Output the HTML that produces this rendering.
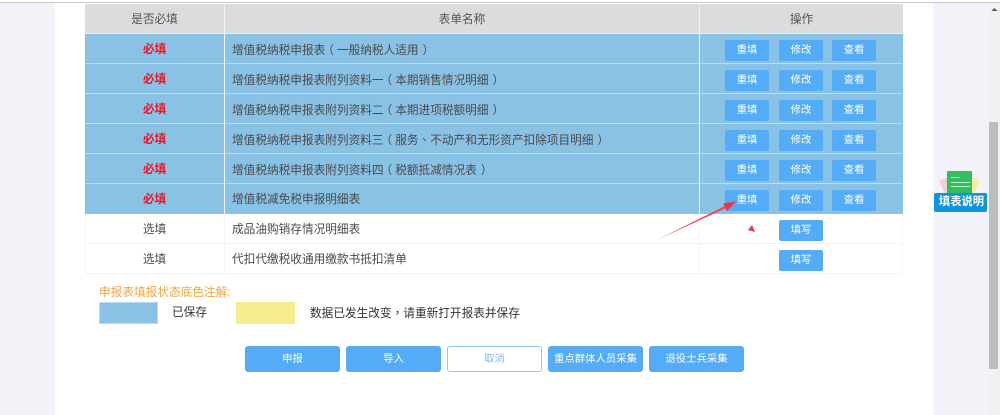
<!DOCTYPE html>
<html lang="zh-Hans"><head><meta charset="utf-8"><title>申报表</title>
<style>
html,body{margin:0;padding:0;width:1000px;height:415px;overflow:hidden;background:#f2f3f8;font-family:"Liberation Sans","Noto Sans CJK SC",sans-serif}
.a{position:absolute;box-sizing:border-box}
.t{position:absolute;white-space:nowrap;font-size:11.67px;line-height:30px;color:#4a4a4a;margin-top:1px}
.t i{font-style:normal;font-family:"Noto Sans CJK TC",sans-serif}
.t i.o{position:relative;left:-3px}
.t i.e{position:relative;left:4px}
.c{text-align:center}
.b{position:absolute;box-sizing:border-box;background:#53acf5;color:#fff;font-size:10.4px;text-align:center;border-radius:2px;white-space:nowrap;padding-top:1px}
.rb{width:44px;height:21px;line-height:20px}
.bb{top:346px;width:95px;height:26px;line-height:25px;border-radius:3px}
</style></head><body>
<div class="a" style="left:0;top:0;width:1000px;height:3px;background:#fff"></div>
<div class="a" style="left:55px;top:3px;width:878px;height:412px;background:#fff"></div>
<div class="a" style="left:0;top:2px;width:1000px;height:1px;background:#c9c9c9"></div>
<div class="a" style="left:989px;top:3px;width:11px;height:412px;background:#f1f1f1"></div>
<div class="a" style="left:989px;top:122px;width:9px;height:247px;background:#bdbdbd"></div>
<svg class="a" style="left:991px;top:7px" width="7" height="5"><path d="M3.5 1 L6.5 4 H0.5 Z" fill="#555"/></svg>

<div class="a" style="left:85px;top:4px;width:818px;height:30px;background:#dcdcdc"></div>
<div class="a" style="left:85px;top:34px;width:818px;height:180px;background:#8ac2e6"></div>
<div class="a" style="left:85px;top:33px;width:818px;height:1px;background:#e8eef3"></div>
<div class="a" style="left:85px;top:63px;width:818px;height:1px;background:#bcdcf0"></div>
<div class="a" style="left:85px;top:93px;width:818px;height:1px;background:#bcdcf0"></div>
<div class="a" style="left:85px;top:123px;width:818px;height:1px;background:#bcdcf0"></div>
<div class="a" style="left:85px;top:153px;width:818px;height:1px;background:#bcdcf0"></div>
<div class="a" style="left:85px;top:183px;width:818px;height:1px;background:#bcdcf0"></div>
<div class="a" style="left:85px;top:243px;width:818px;height:1px;background:#f3f3f3"></div>
<div class="a" style="left:85px;top:273px;width:818px;height:1px;background:#f3f3f3"></div>
<div class="a" style="left:85px;top:214px;width:1px;height:60px;background:#f6f6f6"></div>
<div class="a" style="left:902px;top:214px;width:1px;height:60px;background:#f6f6f6"></div>
<div class="a" style="left:224px;top:4px;width:1px;height:210px;background:#eef4f8"></div>
<div class="a" style="left:699px;top:4px;width:1px;height:210px;background:#eef4f8"></div>
<div class="a" style="left:224px;top:214px;width:1px;height:60px;background:#f3f3f3"></div>
<div class="a" style="left:699px;top:214px;width:1px;height:60px;background:#f3f3f3"></div>

<div class="t c" style="left:85px;top:4px;width:139px;color:#555">是否必填</div>
<div class="t c" style="left:225px;top:4px;width:474px;color:#555">表单名称</div>
<div class="t c" style="left:700px;top:4px;width:203px;color:#555">操作</div>

<div class="t c" style="left:85px;top:34px;width:139px;color:#f5101f;font-weight:bold">必填</div>
<div class="t c" style="left:85px;top:64px;width:139px;color:#f5101f;font-weight:bold">必填</div>
<div class="t c" style="left:85px;top:94px;width:139px;color:#f5101f;font-weight:bold">必填</div>
<div class="t c" style="left:85px;top:124px;width:139px;color:#f5101f;font-weight:bold">必填</div>
<div class="t c" style="left:85px;top:154px;width:139px;color:#f5101f;font-weight:bold">必填</div>
<div class="t c" style="left:85px;top:184px;width:139px;color:#f5101f;font-weight:bold">必填</div>
<div class="t c" style="left:85px;top:214px;width:139px">选填</div>
<div class="t c" style="left:85px;top:244px;width:139px">选填</div>

<div class="t" style="left:232px;top:34px">增值税纳税申报表<i class="o" lang="zh-Hant">（</i>一般纳税人适用<i class="e" lang="zh-Hant">）</i></div>
<div class="t" style="left:232px;top:64px">增值税纳税申报表附列资料一<i class="o" lang="zh-Hant">（</i>本期销售情况明细<i class="e" lang="zh-Hant">）</i></div>
<div class="t" style="left:232px;top:94px">增值税纳税申报表附列资料二<i class="o" lang="zh-Hant">（</i>本期进项税额明细<i class="e" lang="zh-Hant">）</i></div>
<div class="t" style="left:232px;top:124px">增值税纳税申报表附列资料三<i class="o" lang="zh-Hant">（</i>服务<i lang="zh-Hant">、</i>不动产和无形资产扣除项目明细<i class="e" lang="zh-Hant">）</i></div>
<div class="t" style="left:232px;top:154px">增值税纳税申报表附列资料四<i class="o" lang="zh-Hant">（</i>税额抵减情况表<i class="e" lang="zh-Hant">）</i></div>
<div class="t" style="left:232px;top:184px">增值税减免税申报明细表</div>
<div class="t" style="left:232px;top:214px">成品油购销存情况明细表</div>
<div class="t" style="left:232px;top:244px">代扣代缴税收通用缴款书抵扣清单</div>

<div class="b rb" style="left:725px;top:40px">重填</div><div class="b rb" style="left:779px;top:40px">修改</div><div class="b rb" style="left:832px;top:40px">查看</div>
<div class="b rb" style="left:725px;top:70px">重填</div><div class="b rb" style="left:779px;top:70px">修改</div><div class="b rb" style="left:832px;top:70px">查看</div>
<div class="b rb" style="left:725px;top:100px">重填</div><div class="b rb" style="left:779px;top:100px">修改</div><div class="b rb" style="left:832px;top:100px">查看</div>
<div class="b rb" style="left:725px;top:130px">重填</div><div class="b rb" style="left:779px;top:130px">修改</div><div class="b rb" style="left:832px;top:130px">查看</div>
<div class="b rb" style="left:725px;top:160px">重填</div><div class="b rb" style="left:779px;top:160px">修改</div><div class="b rb" style="left:832px;top:160px">查看</div>
<div class="b rb" style="left:725px;top:190px">重填</div><div class="b rb" style="left:779px;top:190px">修改</div><div class="b rb" style="left:832px;top:190px">查看</div>
<div class="b rb" style="left:779px;top:220px">填写</div>
<div class="b rb" style="left:779px;top:250px">填写</div>

<svg class="a" style="left:650px;top:195px" width="115" height="50">
<path d="M7 45 L76 10.5 L77 12.5 Z" fill="#f0434a"/>
<path d="M86 6.5 L73 8.5 L77 16 Z" fill="#f0373f"/>
<path d="M102 30 L98 35 L105 37 Z" fill="#f0373f"/>
</svg>

<div class="t" style="left:99px;top:277px;color:#f5a53c">申报表填报状态底色注解:</div>
<div class="a" style="left:99px;top:302px;width:59px;height:22px;background:#8ac2e6;border:1px solid #b5daf3"></div>
<div class="t" style="left:172px;top:297px;color:#333">已保存</div>
<div class="a" style="left:236px;top:302px;width:59px;height:22px;background:#f5ec8b"></div>
<div class="t" style="left:310px;top:297px;color:#333">数据已发生改变<i lang="zh-Hant">，</i>请重新打开报表并保存</div>

<div class="b bb" style="left:245px">申报</div>
<div class="b bb" style="left:346px">导入</div>
<div class="b bb" style="left:447px;background:#fff;border:1px solid #8ec6f5;color:#8fb4e8;line-height:23px">取消</div>
<div class="b bb" style="left:548px">重点群体人员采集</div>
<div class="b bb" style="left:649px">退役士兵采集</div>

<svg class="a" style="left:936px;top:169px" width="48" height="26">
<path d="M3 12 L11 8 L14 25 H9 Z" fill="#f5cfd8"/>
<path d="M44 12 L36 8 L33 25 H38 Z" fill="#f8eba6"/>
<rect x="11" y="2" width="25" height="24" rx="1" fill="#2fbf5f"/>
<path d="M15 8.5 H24 M15 13.5 H34 M15 17.5 H34" stroke="#bdeccb" stroke-width="1" fill="none"/>
</svg>
<div class="a" style="left:934px;top:193px;width:53px;height:19px;line-height:19px;background:#0b96de;color:#fff;font-size:11.3px;font-weight:bold;text-align:center;border-radius:2px;white-space:nowrap;padding-left:2px">填表说明</div>
</body></html>
